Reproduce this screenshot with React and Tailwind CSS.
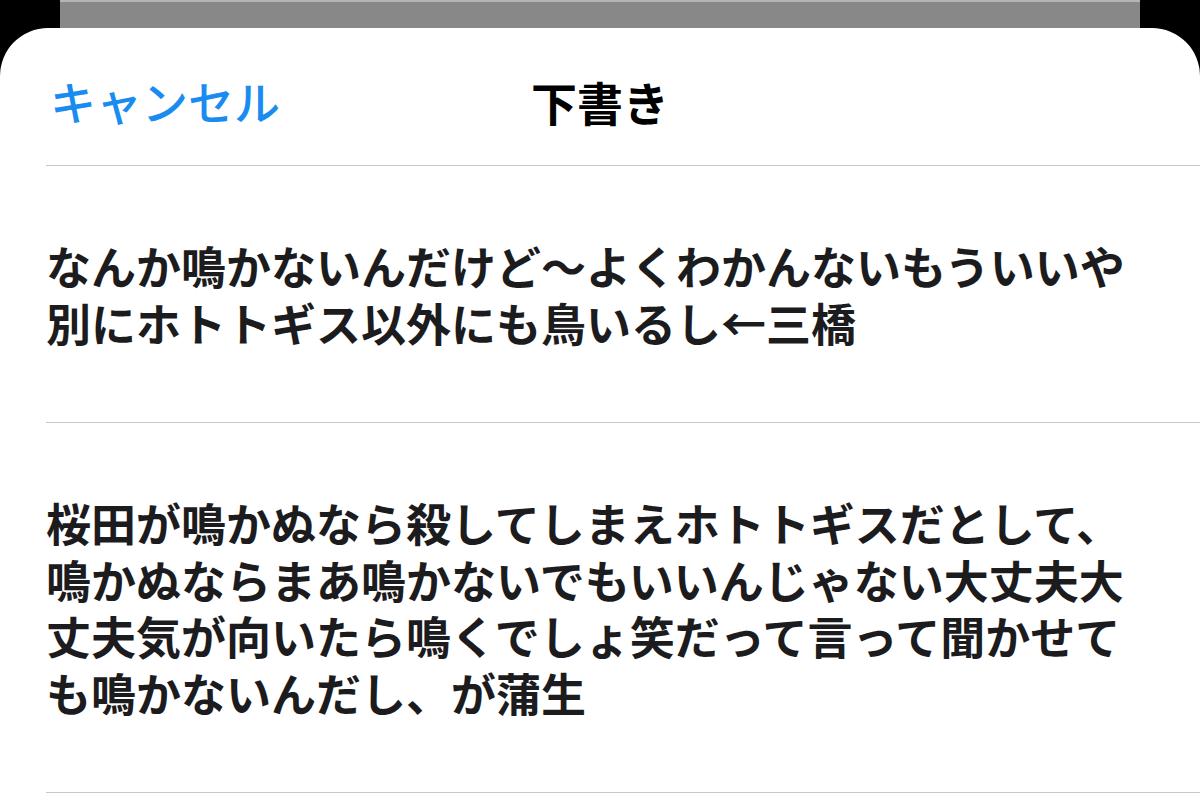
import React from 'react';

const font = { fontFamily: '"Noto Sans CJK JP", "Noto Sans", sans-serif' };

function DraftRow({ lines }) {
    return (
        <div className="border-t border-[#c8c8cc] pt-[72px] pb-[71px]">
            <p className="text-[45px] leading-[56.5px] font-semibold text-[#1c1c1e]">
                {lines.map((l, i) => (
                    <React.Fragment key={i}>
                        {l}
                        {i < lines.length - 1 && <br />}
                    </React.Fragment>
                ))}
            </p>
        </div>
    );
}

export default function App() {
    return (
        <div className="w-[1200px] h-[800px] bg-black overflow-hidden flex flex-col" style={font}>
            <div className="mx-[60px] h-[28px] shrink-0 bg-[#888888] border-t-2 border-[#b5b5b5]"></div>
            <div className="flex-1 bg-white rounded-t-[48px]">
                <div className="relative h-[137px] flex items-center justify-center">
                    <button className="absolute left-[50px] top-[44px] text-[46px] leading-[56px] text-[#1a8cf0] font-medium">
                        キャンセル
                    </button>
                    <h1 className="text-[46px] leading-[56px] font-bold text-black mt-[8px]">下書き</h1>
                </div>
                <div className="pl-[46px]">
                    <DraftRow
                        lines={[
                            'なんか鳴かないんだけど〜よくわかんないもういいや',
                            '別にホトトギス以外にも鳥いるし←三橋',
                        ]}
                    />
                    <DraftRow
                        lines={[
                            '桜田が鳴かぬなら殺してしまえホトトギスだとして、',
                            '鳴かぬならまあ鳴かないでもいいんじゃない大丈夫大',
                            '丈夫気が向いたら鳴くでしょ笑だって言って聞かせて',
                            'も鳴かないんだし、が蒲生',
                        ]}
                    />
                    <div className="border-t border-[#c8c8cc]"></div>
                </div>
            </div>
        </div>
    );
}
